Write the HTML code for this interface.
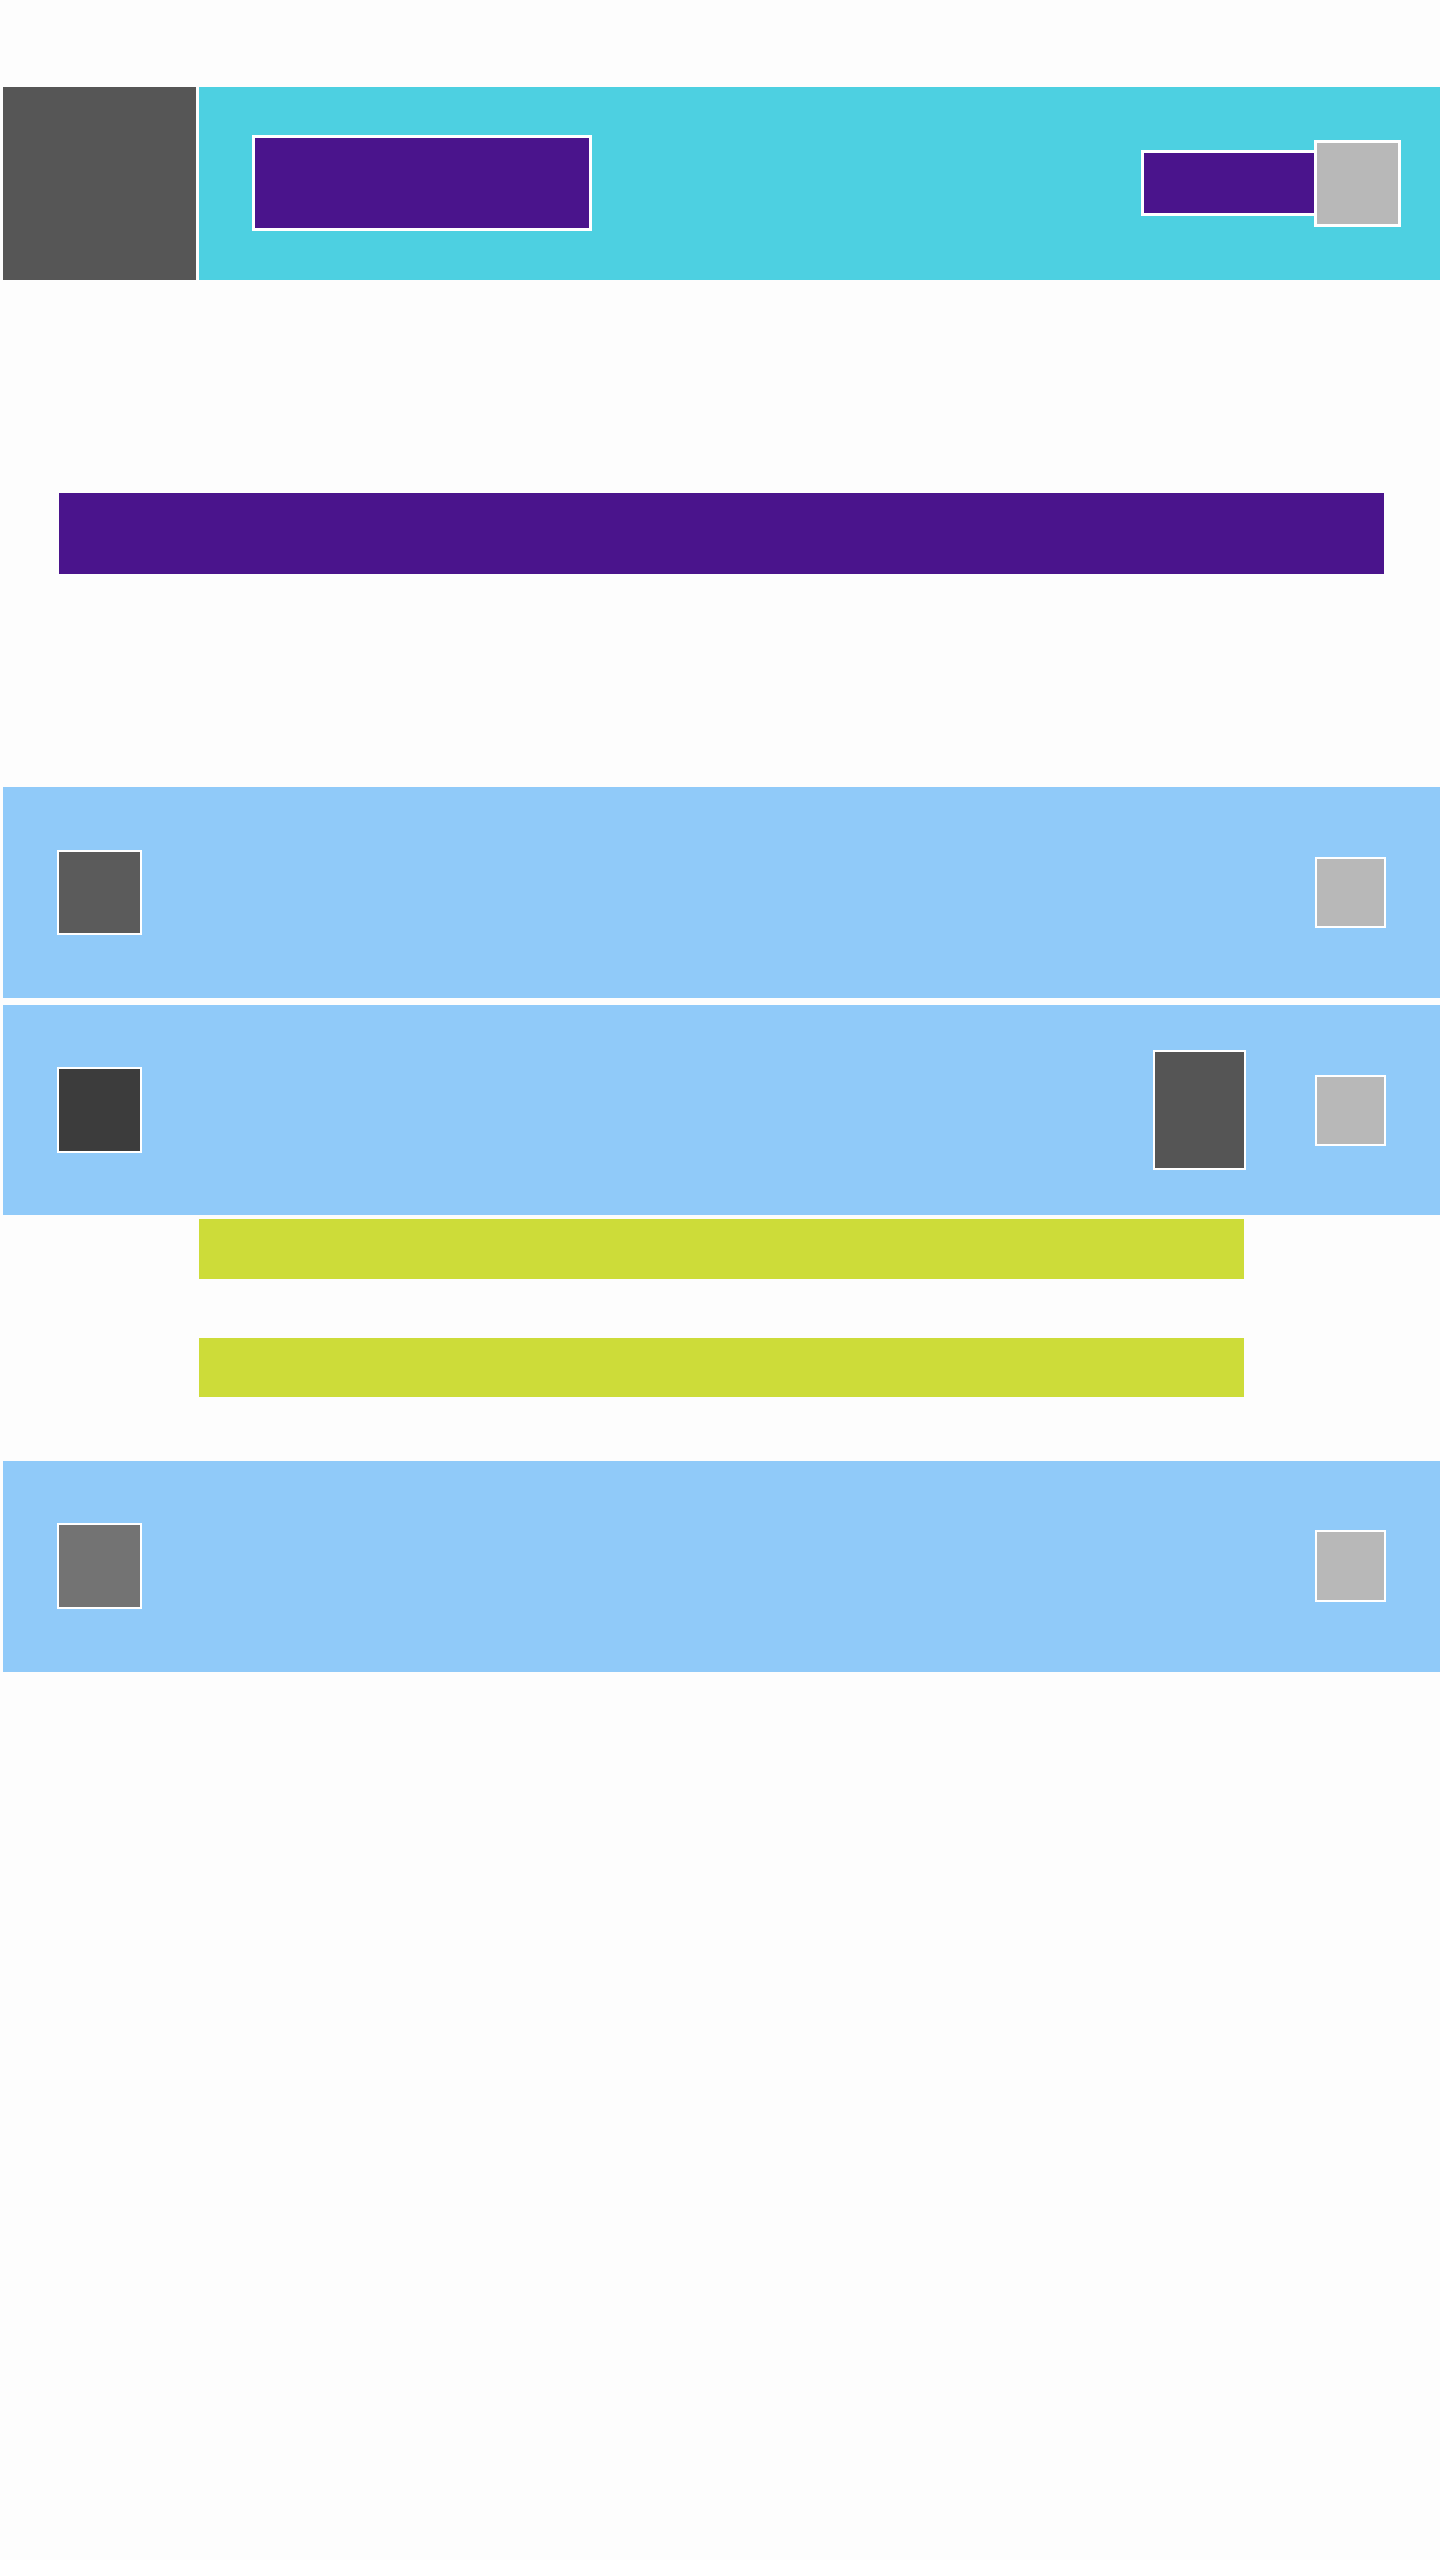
<!DOCTYPE html>
<html><head><meta charset="utf-8"><style>
html,body{margin:0;padding:0;}
body{width:1440px;height:2560px;background:#fdfdfd;position:relative;overflow:hidden;font-family:"Liberation Sans",sans-serif;}
div{position:absolute;box-sizing:border-box;}
.wb{border:3px solid #fff;}
.wb2{border:2px solid #fff;}
</style></head><body>
<div style="left:3px;top:87px;width:193px;height:193px;background:#565656"></div>
<div style="left:199px;top:87px;width:1241px;height:193px;background:#4dd0e1"></div>
<div class="wb" style="left:252px;top:135px;width:340px;height:96px;background:#4a148c"></div>
<div class="wb" style="left:1141px;top:150px;width:176px;height:66px;background:#4a148c"></div>
<div class="wb" style="left:1314px;top:140px;width:87px;height:87px;background:#b8b8b8"></div>

<div style="left:59px;top:493px;width:1325px;height:81px;background:#4a148c"></div>

<div style="left:3px;top:787px;width:1437px;height:211px;background:#90caf9"></div>
<div class="wb2" style="left:57px;top:850px;width:85px;height:85px;background:#5b5b5b"></div>
<div class="wb2" style="left:1315px;top:857px;width:71px;height:71px;background:#b8b8b8"></div>

<div style="left:3px;top:1005px;width:1437px;height:210px;background:#90caf9"></div>
<div class="wb2" style="left:57px;top:1067px;width:85px;height:86px;background:#3c3c3c"></div>
<div class="wb2" style="left:1153px;top:1050px;width:93px;height:120px;background:#555"></div>
<div class="wb2" style="left:1315px;top:1075px;width:71px;height:71px;background:#b8b8b8"></div>

<div style="left:199px;top:1219px;width:1045px;height:60px;background:#cddc39"></div>
<div style="left:199px;top:1338px;width:1045px;height:59px;background:#cddc39"></div>

<div style="left:3px;top:1461px;width:1437px;height:211px;background:#90caf9"></div>
<div class="wb2" style="left:57px;top:1523px;width:85px;height:86px;background:#737373"></div>
<div class="wb2" style="left:1315px;top:1530px;width:71px;height:72px;background:#b8b8b8"></div>
</body></html>
